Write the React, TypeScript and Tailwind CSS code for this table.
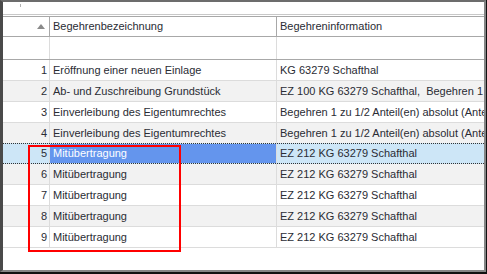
import React from "react";

type Row = { n: number; d: string; i: string };

const rows: Row[] = [
  { n: 1, d: "Eröffnung einer neuen Einlage", i: "KG 63279 Schafthal" },
  { n: 2, d: "Ab- und Zuschreibung Grundstück", i: "EZ 100 KG 63279 Schafthal,  Begehren 1" },
  { n: 3, d: "Einverleibung des Eigentumrechtes", i: "Begehren 1 zu 1/2 Anteil(en) absolut (Anteil" },
  { n: 4, d: "Einverleibung des Eigentumrechtes", i: "Begehren 1 zu 1/2 Anteil(en) absolut (Anteil" },
  { n: 5, d: "Mitübertragung", i: "EZ 212 KG 63279 Schafthal" },
  { n: 6, d: "Mitübertragung", i: "EZ 212 KG 63279 Schafthal" },
  { n: 7, d: "Mitübertragung", i: "EZ 212 KG 63279 Schafthal" },
  { n: 8, d: "Mitübertragung", i: "EZ 212 KG 63279 Schafthal" },
  { n: 9, d: "Mitübertragung", i: "EZ 212 KG 63279 Schafthal" },
];

export default function App() {
  return (
    <div
      className="w-[487px] h-[274px] bg-white overflow-hidden text-[11px] text-[#2a2c34]"
      style={{ fontFamily: '"Liberation Sans", Arial, sans-serif' }}
    >
      <div className="w-full h-full border-b-2 border-r border-[#111]">
        <div className="w-full h-full border-l-[3px] border-t-2 border-r-2 border-b-2 border-l-[#4a4a4a] border-t-[#6c6c6c] border-r-[#858585] border-b-[#858585] relative">
          {/* top toolbar area */}
          <div className="h-[12px] relative">
            <div className="absolute left-[17px] top-[2px] w-px h-[3px] bg-[#b0b0b0]" />
          </div>
          <div className="h-px bg-[#c8c8c8]" />
          <div className="h-px bg-white" />
          {/* header */}
          <div className="flex h-[21px] border-t border-b border-[#a8a8a8]">
            <div className="w-[47px] shrink-0 border-r border-[#a8a8a8] flex items-center justify-end pr-[4px]">
              <svg width="8" height="5" viewBox="0 0 8 5">
                <polygon points="0,5 8,5 4,0" fill="#8a8a8a" />
              </svg>
            </div>
            <div className="w-[227px] shrink-0 border-r border-[#a8a8a8] flex items-center pl-[3px] whitespace-nowrap">
              Begehrenbezeichnung
            </div>
            <div className="flex-1 flex items-center pl-[3px] whitespace-nowrap">Begehreninformation</div>
          </div>
          {/* filter row */}
          <div className="flex h-[23px] border-b border-[#a8a8a8]">
            <div className="w-[47px] shrink-0 border-r border-[#dcdcdc]" />
            <div className="w-[227px] shrink-0 border-r border-[#dcdcdc]" />
            <div className="flex-1" />
          </div>
          {/* rows */}
          {rows.map((r) => {
            const sel = r.n === 5;
            const even = r.n % 2 === 0;
            const base = sel ? "bg-[#cde6f7]" : even ? "bg-[#f2f2f2]" : "bg-white";
            return (
              <div
                key={r.n}
                className={`flex h-[21px] border-b ${sel ? "border-dotted border-[#333] border-t -mt-px" : "border-[#dcdcdc]"} ${base}`}
              >
                <div className="w-[47px] shrink-0 border-r border-[#dcdcdc] flex items-center justify-end pr-[2px]">
                  {r.n}
                </div>
                <div
                  className={`w-[227px] shrink-0 border-r border-[#dcdcdc] flex items-center pl-[3px] whitespace-nowrap overflow-hidden ${
                    sel ? "bg-[#6495ed] text-white" : ""
                  }`}
                >
                  {r.d}
                </div>
                <div className="flex-1 min-w-0 flex items-center pl-[3px] whitespace-pre overflow-hidden">{r.i}</div>
              </div>
            );
          })}
          {/* red highlight rectangle */}
          <div className="absolute left-[25px] top-[143px] w-[153px] h-[107px] border-2 border-[#ff0000] pointer-events-none" />
        </div>
      </div>
    </div>
  );
}
